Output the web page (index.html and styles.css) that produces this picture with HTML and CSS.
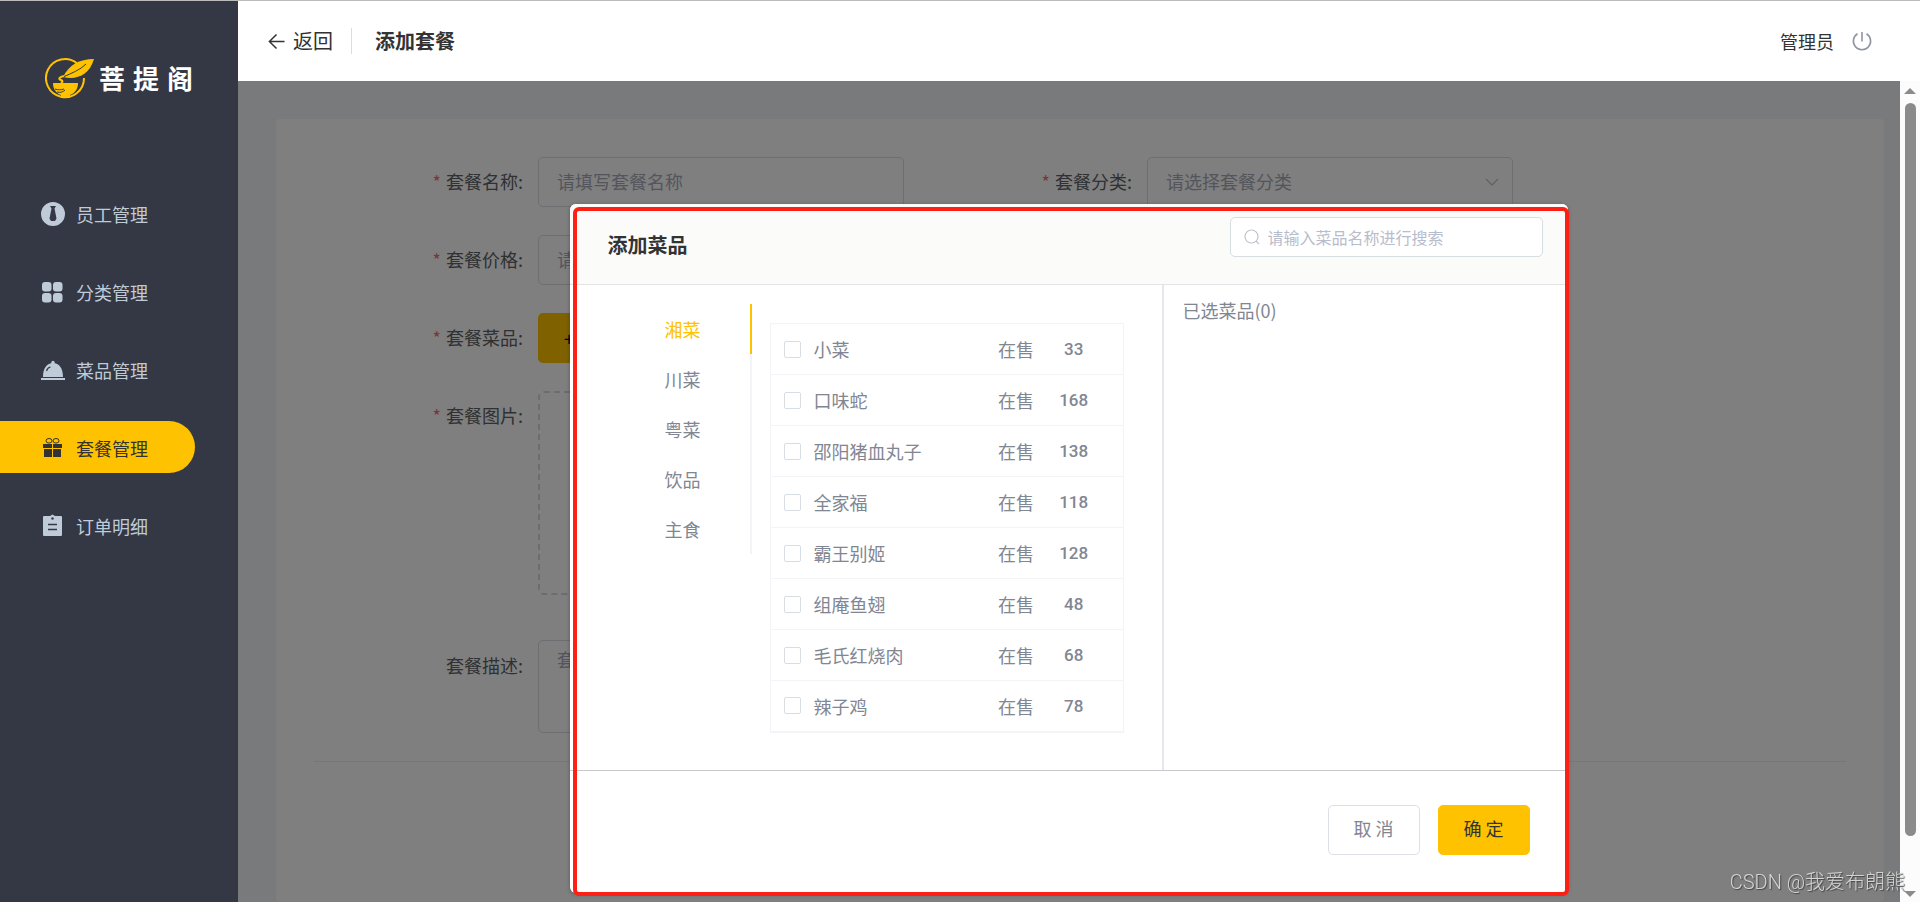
FILE: index.html
```html
<!DOCTYPE html>
<html lang="zh-CN">
<head>
<meta charset="utf-8">
<title>添加套餐</title>
<link rel="stylesheet" href="styles.css">
</head>
<body>
<div class="app">
  <aside class="sidebar">
    <div class="logo">
      <svg class="logo-mark" viewBox="0 0 50 42" aria-hidden="true">
        <path d="M32 5.400A19 19 0 1 0 39 20" fill="none" stroke="#ffc200" stroke-width="2"/>
        <path d="M49 1C34 1 24 7 18 19c13 3 26-1 31-18Z" fill="#ffc200"/>
        <path d="M18 19C27 15 35 12 41 6" fill="none" stroke="#343744" stroke-width="1"/>
        <path d="M19 18c-5 1-6 3-3 4 2 1 2 2 0 3" fill="none" stroke="#ffc200" stroke-width="2"/>
        <path d="M8 25h25c0 6-3 10-8 12v3h-9v-3c-5-2-8-6-8-12Z" fill="#ffc200"/>
        <path d="M10 31c3 1 6 1 9 0M12 34c3 1 6 0 8-2" fill="none" stroke="#343744" stroke-width="1"/>
      </svg>
      <span class="logo-text"><span>菩</span><span>提</span><span>阁</span></span>
    </div>
    <nav class="menu">
      <a class="menu-item" href="#">
        <svg class="menu-icon" viewBox="0 0 24 24" fill="currentColor"><path fill-rule="evenodd" d="M12 0a12 12 0 1 0 0 24 12 12 0 0 0 0-24ZM9 4h6l-1.500 2.500 2 10L14 19h-4l-1.500-2.500 2-10Z"/></svg>
        员工管理</a>
      <a class="menu-item" href="#">
        <svg class="menu-icon" viewBox="0 0 24 24" fill="currentColor"><rect x="1" y="2" width="9.500" height="9.500" rx="3"/><rect x="12" y="2" width="9.500" height="9.500" rx="3"/><rect x="1" y="13" width="9.500" height="9.500" rx="3"/><rect x="12" y="13" width="9.500" height="9.500" rx="3"/></svg>
        分类管理</a>
      <a class="menu-item" href="#">
        <svg class="menu-icon" viewBox="0 0 24 24"><circle cx="12" cy="4.500" r="1.700" fill="currentColor"/><path d="M2 19C2 10 6 5 12 5s10 5 10 14ZM0 20h24v2H0Z" fill="currentColor"/><path d="M5.500 13C6 11 7.500 9.500 9.500 9" fill="none" stroke="#343744" stroke-width="1.200"/></svg>
        菜品管理</a>
      <a class="menu-item menu-item-active" href="#">
        <svg class="menu-icon" viewBox="0 0 24 24" fill="currentColor"><path d="M2 8h9v4H2ZM12 8h9v4h-9ZM3 13h8v8H3ZM12 13h8v8h-8Z"/><ellipse cx="8" cy="4.800" rx="3" ry="2.300" fill="none" stroke="currentColor"/><ellipse cx="15" cy="4.800" rx="3" ry="2.300" fill="none" stroke="currentColor"/></svg>
        套餐管理</a>
      <a class="menu-item" href="#">
        <svg class="menu-icon" viewBox="0 0 24 24"><path d="M3 2h6l2.500-1.500L14 2h6a1 1 0 0 1 1 1v18a1 1 0 0 1-1 1H3a1 1 0 0 1-1-1V3a1 1 0 0 1 1-1Z" fill="currentColor"/><path d="M7 10.500h9M7 15.500h9" stroke="#343744" stroke-width="1.300"/><circle cx="11.500" cy="4.500" r="1.200" fill="#343744"/></svg>
        订单明细</a>
    </nav>
  </aside>

  <div class="page">
    <header class="topbar">
      <a class="back" href="#">
        <svg class="back-icon" viewBox="0 0 18 18" fill="none" stroke="#333" stroke-width="1.600"><path d="M17.500 9H1.500M9 1.500 1.500 9 9 16.500"/></svg>
        返回</a>
      <h1 class="page-title">添加套餐</h1>
      <div class="account">
        <span>管理员</span>
        <button class="logout" type="button" aria-label="退出">
          <svg viewBox="0 0 20 20" fill="none" stroke="#8f95a3" stroke-width="1.600"><path d="M5.500 2.800a8.600 8.600 0 1 0 9 0M10 1v9.500"/></svg>
        </button>
      </div>
    </header>

    <div class="body">
      <main class="content">
        <form class="card">
          <div class="row">
            <label class="label required" for="name">套餐名称:</label>
            <input class="field" id="name" type="text" placeholder="请填写套餐名称">
            <label class="label required" for="category">套餐分类:</label>
            <div class="select-wrap">
              <select class="field" id="category"><option>请选择套餐分类</option></select>
              <svg class="chevron" viewBox="0 0 14 14" fill="none" stroke="#c0c4cc" stroke-width="1.400"><path d="m1 4 6 6 6-6"/></svg>
            </div>
          </div>
          <div class="row">
            <label class="label required" for="price">套餐价格:</label>
            <input class="field" id="price" type="text" placeholder="请设置套餐价格">
          </div>
          <div class="row">
            <span class="label required">套餐菜品:</span>
            <button class="add" type="button">+ 添加菜品</button>
          </div>
          <div class="row row-top">
            <span class="label required">套餐图片:</span>
            <div class="upload"></div>
          </div>
          <div class="row row-desc">
            <label class="label" for="desc">套餐描述:</label>
            <textarea class="field area" id="desc" placeholder="套餐描述,最长200字"></textarea>
          </div>
          <hr class="rule">
        </form>

        <div class="overlay">
          <section class="dialog" role="dialog" aria-labelledby="dialog-title">
            <div class="dialog-head">
              <h2 class="dialog-title" id="dialog-title">添加菜品</h2>
              <div class="search">
                <svg class="search-icon" viewBox="0 0 16 16" fill="none" stroke="#c0c4cc" stroke-width="1.200"><circle cx="7.500" cy="7.500" r="6.500"/><path d="m12 12 3 3"/></svg>
                <input class="search-input" type="text" aria-label="搜索菜品" placeholder="请输入菜品名称进行搜索">
              </div>
            </div>
            <div class="dialog-body">
              <div class="picker">
                <div class="tabs">
                  <button class="tab tab-active" type="button">湘菜</button>
                  <button class="tab" type="button">川菜</button>
                  <button class="tab" type="button">粤菜</button>
                  <button class="tab" type="button">饮品</button>
                  <button class="tab" type="button">主食</button>
                </div>
                <table class="dishes">
                  <tbody>
                    <tr><td class="dish"><label><input class="check" type="checkbox">小菜</label></td><td class="state">在售</td><td class="price">33</td></tr>
                    <tr><td class="dish"><label><input class="check" type="checkbox">口味蛇</label></td><td class="state">在售</td><td class="price">168</td></tr>
                    <tr><td class="dish"><label><input class="check" type="checkbox">邵阳猪血丸子</label></td><td class="state">在售</td><td class="price">138</td></tr>
                    <tr><td class="dish"><label><input class="check" type="checkbox">全家福</label></td><td class="state">在售</td><td class="price">118</td></tr>
                    <tr><td class="dish"><label><input class="check" type="checkbox">霸王别姬</label></td><td class="state">在售</td><td class="price">128</td></tr>
                    <tr><td class="dish"><label><input class="check" type="checkbox">组庵鱼翅</label></td><td class="state">在售</td><td class="price">48</td></tr>
                    <tr><td class="dish"><label><input class="check" type="checkbox">毛氏红烧肉</label></td><td class="state">在售</td><td class="price">68</td></tr>
                    <tr><td class="dish"><label><input class="check" type="checkbox">辣子鸡</label></td><td class="state">在售</td><td class="price">78</td></tr>
                  </tbody>
                </table>
              </div>
              <div class="chosen">已选菜品(0)</div>
            </div>
            <div class="dialog-foot">
              <button class="btn" type="button">取 消</button>
              <button class="btn btn-primary" type="button">确 定</button>
            </div>
            <div class="highlight"></div>
          </section>
        </div>
      </main>
      <div class="scrollbar">
        <svg class="arrow" viewBox="0 0 12 6"><path d="M6 0 12 6H0Z" fill="#8b8b8b"/></svg>
        <div class="thumb"></div>
        <svg class="arrow" viewBox="0 0 12 6"><path d="M6 6 0 0h12Z" fill="#8b8b8b"/></svg>
      </div>
    </div>
  </div>
</div>
<div class="watermark">CSDN @我爱布朗熊</div>
</body>
</html>
```
FILE: styles.css
```css
* { box-sizing: border-box; }

body {
  margin: 0;
  font-family: "Noto Sans CJK SC", "Noto Sans", sans-serif;
  font-size: 18px;
  font-weight: 400;
  line-height: 26px;
  color: #333;
}

button, input, select, textarea { font: inherit; color: inherit; }
button { padding: 0; border: 0; background: none; }
a { color: inherit; text-decoration: none; }

.app {
  display: flex;
  height: 100vh;
  border-top: 1px solid #bbb;
  overflow: hidden;
}

/* Sidebar */
.sidebar { flex: none; width: 238px; background: #343744; }
.logo { display: flex; align-items: center; gap: 4px; padding: 57px 0 0 45px; }
.logo-mark { width: 50px; height: 42px; }
.logo-text { display: flex; gap: 8px; padding-bottom: 2px; font-size: 26px; font-weight: 700; line-height: 36px; color: #fff; }
.menu { display: flex; flex-direction: column; gap: 26px; padding-top: 87px; }
.menu-item {
  display: flex;
  align-items: center;
  gap: 11px;
  width: 195px;
  height: 52px;
  padding: 2px 0 0 41px;
  border-radius: 0 26px 26px 0;
  color: #bfcbd9;
}
.menu-item-active { background: #ffc200; color: #333; }
.menu-icon { width: 24px; height: 24px; }

/* Top bar */
.page { flex: 1; min-width: 0; display: flex; flex-direction: column; }
.topbar { flex: none; display: flex; align-items: center; height: 80px; padding: 0 48px 0 30px; background: #fff; }
.back { display: flex; align-items: center; gap: 8px; padding-right: 18px; border-right: 1px solid #d8dde3; font-size: 20px; }
.back-icon { width: 17px; height: 17px; }
.page-title { margin: 0 0 0 23px; font-size: 20px; font-weight: 700; }
.account { display: flex; align-items: center; gap: 18px; margin-left: auto; }
.logout { width: 20px; height: 20px; }
.logout svg { display: block; }

/* Set meal form */
.body { flex: 1; min-height: 0; display: flex; }
.content { position: relative; flex: 1; min-width: 0; padding: 38px 16px 0 38px; background: #f3f4f7; overflow: hidden; }
.card { min-height: 100%; padding: 38px 38px 0; border-radius: 4px; background: #fff; }
.row { display: grid; grid-template-columns: 209px 366px 213px 366px; column-gap: 15px; align-items: center; margin-bottom: 28px; }
.row-top { align-items: start; margin-bottom: 45px; }
.row-top .label { padding-top: 11px; }
.row-desc { align-items: start; }
.row-desc .label { padding-top: 12px; }
.label { padding-bottom: 2px; text-align: right; color: #606266; }
.required::before { content: "*"; margin-right: 5px; color: #f56c6c; }
.field {
  display: block;
  width: 100%;
  height: 50px;
  padding: 0 18px 2px;
  border: 1px solid #d8dde3;
  border-radius: 5px;
  background: #fff;
  outline: 0;
}
.field::placeholder { color: #a8abb8; opacity: 1; }
.area { height: 93px; padding: 5px 18px; resize: none; }
.select-wrap { position: relative; }
.select-wrap .field { appearance: none; color: #a8abb8; }
.chevron { position: absolute; top: 18px; right: 14px; width: 14px; height: 14px; }
.add { width: 150px; height: 50px; padding-left: 26px; border-radius: 5px; background: #ffc200; color: #000; text-align: left; }
.upload { width: 250px; height: 204px; border: 2px dashed #d9d9e3; border-radius: 6px; }
.rule { height: 1px; margin: 0; border: 0; background: #efefef; }

/* Dish dialog */
.overlay {
  position: absolute;
  inset: 0;
  display: flex;
  justify-content: center;
  align-items: flex-start;
  padding-top: 123px;
  background: rgba(0, 0, 0, 0.5);
}
.dialog { position: relative; width: 60%; border-radius: 6px; background: #fff; box-shadow: 0 1px 4px rgba(0, 0, 0, 0.3); color: #818693; }
.dialog-head {
  display: flex;
  align-items: flex-start;
  justify-content: space-between;
  height: 81px;
  padding: 13px 25px 0 37px;
  border-bottom: 1px solid #e4e4e4;
  border-radius: 6px 6px 0 0;
  background: #fbfbfa;
}
.dialog-title { margin: 15px 0 0; font-size: 20px; font-weight: 700; color: #333; }
.search { display: flex; align-items: center; gap: 8px; width: 313px; height: 40px; padding: 0 13px; border: 1px solid #d8dde3; border-radius: 5px; background: #fff; }
.search-icon { flex: none; width: 16px; height: 16px; }
.search-input { flex: 1; min-width: 0; padding: 0; border: 0; outline: 0; font-size: 16px; background: none; }
.search-input::placeholder { color: #b8bdcc; opacity: 1; }

.dialog-body { display: flex; border-bottom: 1px solid #c8c9cc; }
.picker { flex: none; display: flex; align-items: flex-start; gap: 18px; width: 594px; padding: 19px 38px 37px 0; border-right: 2px solid #e4e7ed; }
.tabs { display: flex; flex-direction: column; width: 182px; }
.tab { height: 50px; padding-right: 50px; border-right: 2px solid #f3f4f7; text-align: right; }
.tab-active { border-color: #ffc200; color: #ffc200; }
.dishes { flex: 1; margin-top: 19px; border-collapse: collapse; border: 1px solid #f3f4f7; }
.dishes tr { height: 51px; border-bottom: 1px solid #f3f4f7; }
.dishes tr:last-child { border-bottom-width: 2px; }
.dishes td { padding: 0; }
.dish label { display: flex; align-items: center; gap: 12px; padding-left: 13px; }
.check { appearance: none; width: 17px; height: 17px; margin: 0; border: 1px solid #d8dde3; border-radius: 2px; background: #fff; }
.state { width: 50px; }
.dishes .price { width: 76px; padding-right: 24px; text-align: center; font-family: Roboto, sans-serif; font-size: 17px; font-weight: 500; }
.chosen { padding: 12px 18px; }

.dialog-foot { display: flex; justify-content: flex-end; gap: 18px; padding: 34px 38px 38px; }
.btn { width: 92px; height: 50px; padding-bottom: 4px; border: 1px solid #dcdfe6; border-radius: 5px; background: #fff; }
.btn-primary { border-color: #ffc200; background: #ffc200; color: #333; }
.highlight { position: absolute; inset: 3px -1px -3px 3px; border: 4px solid #ff2015; border-radius: 6px; pointer-events: none; }

/* Scroll track */
.scrollbar { flex: none; display: flex; flex-direction: column; align-items: center; gap: 9px; width: 20px; padding: 7px 0 5px; background: #fcfcfc; }
.arrow { flex: none; width: 12px; height: 6px; }
.thumb { flex: 1; width: 11px; margin-bottom: 46px; border-radius: 6px; background: #8b8b8b; }

.watermark { position: fixed; right: 15px; bottom: 7px; font-family: Roboto, "Noto Sans CJK SC", sans-serif; font-size: 20px; font-weight: 300; color: #d4d4d4; text-shadow: 1px 1px 1px #444; }
```
